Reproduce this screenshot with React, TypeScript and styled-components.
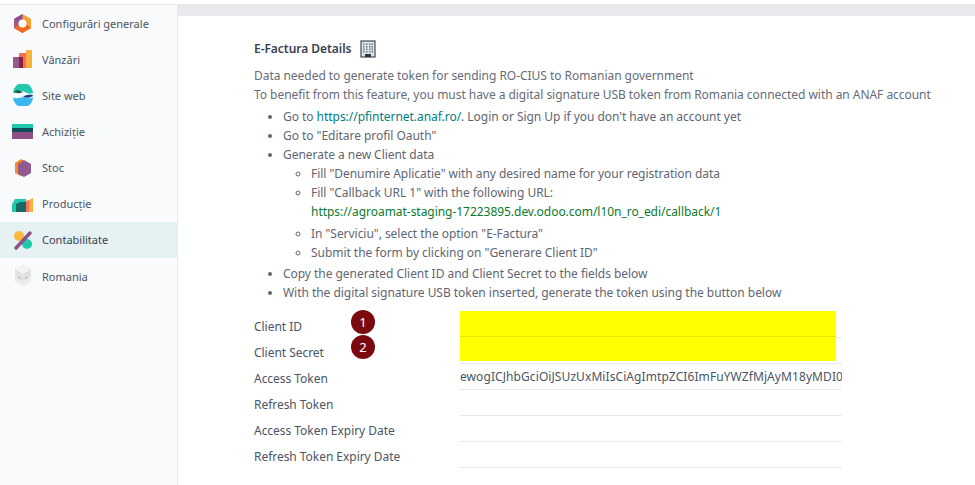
import React from 'react'
import styled, { createGlobalStyle } from 'styled-components'

const GlobalStyle = createGlobalStyle`
  html, body {
    margin: 0;
    padding: 0;
    background: #fff;
  }
  body {
    font-family: "Noto Sans", "Open Sans", sans-serif;
    font-size: 12px;
    letter-spacing: -0.04px;
    color: #4a5160;
    overflow: hidden;
  }
`

const Page = styled.div`
  display: flex;
  width: 975px;
  height: 485px;
  overflow: hidden;
  padding-top: 4px;
  box-sizing: border-box;
`

const Sidebar = styled.nav`
  width: 178px;
  flex: none;
  background: #f9fafb;
  border-right: 1px solid #e7e9ed;
  border-top: 1px solid #e7e9ed;
  box-sizing: border-box;
`

const NavItem = styled.div<{ $active?: boolean }>`
  display: flex;
  align-items: center;
  height: 36.15px;
  padding-left: 12px;
  gap: 8px;
  font-size: 11px;
  letter-spacing: 0;
  background: ${p => (p.$active ? '#e6f1f3' : 'transparent')};
  color: ${p => (p.$active ? '#374151' : '#4b5563')};
`

const NavIcon = styled.svg`
  width: 22px;
  height: 22px;
  flex: none;
`

const Main = styled.main`
  flex: 1;
  min-width: 0;
`

const TopBand = styled.div`
  height: 12px;
  background: #e8e9ed;
`

const Content = styled.div`
  padding: 21px 0 0 76px;
`

const TitleRow = styled.div`
  display: flex;
  align-items: center;
  gap: 7px;
  height: 24px;
`

const Title = styled.h3`
  margin: 0;
  font-size: 12px;
  font-weight: 600;
  line-height: 18px;
  color: #374151;
`

const Intro = styled.p`
  margin: 5px 0 0;
  line-height: 19px;
  white-space: nowrap;
  color: #666c78;
`

const Steps = styled.ul`
  margin: 3px 0 0;
  padding: 0 0 0 29px;
  line-height: 19px;
  color: #5f6673;
  white-space: nowrap;
  list-style: disc;
`

const SubSteps = styled.ul`
  margin: 0 0 2px;
  padding: 0 0 0 28px;
  list-style: circle;
`

const CallbackSpacer = styled.div`
  height: 3px;
`

const Anchor = styled.a`
  color: #017e84;
  text-decoration: none;
`

const GreenLink = styled.a`
  color: #0a7a2e;
  text-decoration: none;
`

const Form = styled.div`
  margin-top: 10px;
  display: flex;
  flex-direction: column;
`

const FormRow = styled.div`
  position: relative;
  display: flex;
  height: 26px;
`

const FieldLabel = styled.label`
  width: 206px;
  flex: none;
  line-height: 30px;
  color: #4b5563;
`

const FieldValue = styled.div`
  width: 382px;
  height: 26px;
  box-sizing: border-box;
  border-bottom: 1px solid #e8e9ec;
  line-height: 24px;
  overflow: hidden;
  white-space: nowrap;
  letter-spacing: 0.08px;
  color: #4b5563;
  padding-top: 1px;
`

const Redacted = styled.div<{ $second?: boolean }>`
  position: absolute;
  left: 206px;
  top: -1px;
  width: 376px;
  height: ${p => (p.$second ? 24 : 26)}px;
  background: #ffff00;
  border-bottom: ${p => (p.$second ? 0 : '1px solid #e8e800')};
  box-sizing: border-box;
`

const Badge = styled.span<{ $top: number }>`
  position: absolute;
  left: 97px;
  top: ${p => p.$top}px;
  width: 24px;
  height: 24px;
  border-radius: 50%;
  background: #7b0a0f;
  color: #fff;
  font-size: 13px;
  line-height: 24px;
  text-align: center;
`

const BuildingIcon = styled.svg`
  width: 16px;
  height: 18px;
  flex: none;
  margin-left: 2px;
`

const SettingsIcon = () => (
  <NavIcon viewBox="0 0 22 22">
    <path d="M10.5 2 L2 7 V16 L10.5 21Z" fill="#9a5b8f" />
    <path d="M10.5 2 L19 7 V16 L10.5 21Z" fill="#f5a030" />
    <path d="M10.5 21 L19 16 L14 12 H7 L2 16Z" fill="#f26a21" />
    <path d="M10.5 2 L2 7 L7 11 H10.5Z" fill="#8f4f87" />
    <circle cx="10.5" cy="11.5" r="4" fill="#fff" />
  </NavIcon>
)

const SalesIcon = () => (
  <NavIcon viewBox="0 0 22 22">
    <rect x="14" y="2" width="6" height="18" fill="#fbb03b" />
    <rect x="7" y="5" width="7" height="15" fill="#f4714d" />
    <rect x="1" y="9" width="7" height="11" fill="#965a8c" />
    <rect x="7" y="9" width="4" height="11" fill="#8a2145" />
  </NavIcon>
)

const WebsiteIcon = () => (
  <NavIcon viewBox="0 0 22 22">
    <path d="M1 9 A10 10 0 0 1 21 9 C16 11 14 8 10 7 C6 6 4 10 1 9Z" fill="#22c9ad" />
    <path d="M1 13.5 A10 10 0 0 0 21 13 C17 16 13 12 9 13.5 C6 14.5 3 14.5 1 13.5Z" fill="#38b8ee" />
    <path d="M2 7.5 C5 5 8 6.5 11 8 C8 9.5 5 10 2 7.5Z" fill="#17604f" />
    <path d="M11 12.5 C14 10.5 18 10.5 21 11 C20 14 14 14.5 11 12.5Z" fill="#1b3f87" />
  </NavIcon>
)

const PurchaseIcon = () => (
  <NavIcon viewBox="0 0 22 22">
    <rect x="0" y="4" width="21" height="4" fill="#20c9ae" />
    <rect x="0" y="8" width="21" height="4" fill="#0f4f5c" />
    <rect x="0" y="12" width="21" height="7" fill="#8f4f87" />
  </NavIcon>
)

const StockIcon = () => (
  <NavIcon viewBox="0 0 22 22">
    <path d="M9 2 L16 6 V15 L9 19 L3 16 V6Z" fill="#f98a1c" />
    <path d="M12 3 L19 7 V16 L12 20 L6 17 V7Z" fill="#935a8f" />
  </NavIcon>
)

const ManufacturingIcon = () => (
  <NavIcon viewBox="0 0 22 22">
    <path d="M0 11 L3 6 H14 V19 H0Z" fill="#20c9ae" />
    <path d="M4 11 L8 9 H14 V19 H4Z" fill="#176a62" />
    <path d="M14 8 L17 7 V19 H14Z" fill="#f9735b" />
    <path d="M17 7 L21 5 V19 H17Z" fill="#fbb03b" />
  </NavIcon>
)

const AccountingIcon = () => (
  <NavIcon viewBox="0 0 22 22">
    <circle cx="7" cy="7" r="5" fill="#fbb93f" />
    <circle cx="15" cy="15" r="5" fill="#20c9ae" />
    <path d="M4 19 L18 4" stroke="#8f4f87" strokeWidth="3.5" strokeLinecap="round" />
  </NavIcon>
)

const CompanyIcon = () => (
  <NavIcon viewBox="0 0 22 22">
    <path d="M11 0 L19 4 V16 L11 21 L3 16 V4Z" fill="#e2e2e2" />
    <path d="M11 0 L19 4 L11 9 L3 4Z" fill="#f3f3f3" />
    <path d="M3 11 L11 16 L19 11 V16 L11 21 L3 16Z" fill="#ececec" />
    <path d="M6 12 L9 14 M13 14 L16 12" stroke="#c9b9c9" strokeWidth="1.5" />
  </NavIcon>
)

const apps = [
  { name: 'Configurări generale', icon: <SettingsIcon /> },
  { name: 'Vânzări', icon: <SalesIcon /> },
  { name: 'Site web', icon: <WebsiteIcon /> },
  { name: 'Achiziție', icon: <PurchaseIcon /> },
  { name: 'Stoc', icon: <StockIcon /> },
  { name: 'Producție', icon: <ManufacturingIcon /> },
  { name: 'Contabilitate', icon: <AccountingIcon />, active: true },
  { name: 'Romania', icon: <CompanyIcon /> },
]

export default function App() {
  return (
    <Page>
      <GlobalStyle />
      <Sidebar>
        {apps.map(app => (
          <NavItem key={app.name} $active={app.active}>
            {app.icon}
            {app.name}
          </NavItem>
        ))}
      </Sidebar>
      <Main>
        <TopBand />
        <Content>
          <TitleRow>
            <Title>E-Factura Details</Title>
            <BuildingIcon viewBox="0 0 16 18">
              <rect x="1" y="1" width="14" height="16" fill="#dfe3e8" stroke="#3f4a5a" strokeWidth="1.2" />
              {[3.5, 6, 8.5, 11].map(y =>
                [3.5, 6.5, 9.5, 12].map(x => <rect key={`${x}-${y}`} x={x - 0.5} y={y} width="1.5" height="1.5" fill="#6b7687" />),
              )}
              <rect x="5" y="14" width="6" height="3" fill="#2b3648" />
            </BuildingIcon>
          </TitleRow>
          <Intro>
            Data needed to generate token for sending RO-CIUS to Romanian government
            <br />
            To benefit from this feature, you must have a digital signature USB token from Romania connected with an ANAF account
          </Intro>
          <Steps>
            <li>
              Go to <Anchor href="#">https://pfinternet.anaf.ro/</Anchor>. Login or Sign Up if you don't have an account yet
            </li>
            <li>Go to "Editare profil Oauth"</li>
            <li>
              Generate a new Client data
              <SubSteps>
                <li>Fill "Denumire Aplicatie" with any desired name for your registration data</li>
                <li>
                  Fill "Callback URL 1" with the following URL:
                  <br />
                  <GreenLink href="#">https://agroamat-staging-17223895.dev.odoo.com/l10n_ro_edi/callback/1</GreenLink>
                  <CallbackSpacer />
                </li>
                <li>In "Serviciu", select the option "E-Factura"</li>
                <li>Submit the form by clicking on "Generare Client ID"</li>
              </SubSteps>
            </li>
            <li>Copy the generated Client ID and Client Secret to the fields below</li>
            <li>With the digital signature USB token inserted, generate the token using the button below</li>
          </Steps>
          <Form>
            <FormRow>
              <FieldLabel>Client ID</FieldLabel>
              <FieldValue />
              <Redacted />
              <Badge $top={-2}>1</Badge>
            </FormRow>
            <FormRow>
              <FieldLabel>Client Secret</FieldLabel>
              <FieldValue />
              <Redacted $second />
              <Badge $top={-3}>2</Badge>
            </FormRow>
            <FormRow>
              <FieldLabel>Access Token</FieldLabel>
              <FieldValue>ewogICJhbGciOiJSUzUxMiIsCiAgImtpZCI6ImFuYWZfMjAyM18yMDI0</FieldValue>
            </FormRow>
            <FormRow>
              <FieldLabel>Refresh Token</FieldLabel>
              <FieldValue />
            </FormRow>
            <FormRow>
              <FieldLabel>Access Token Expiry Date</FieldLabel>
              <FieldValue />
            </FormRow>
            <FormRow>
              <FieldLabel>Refresh Token Expiry Date</FieldLabel>
              <FieldValue />
            </FormRow>
          </Form>
        </Content>
      </Main>
    </Page>
  )
}
